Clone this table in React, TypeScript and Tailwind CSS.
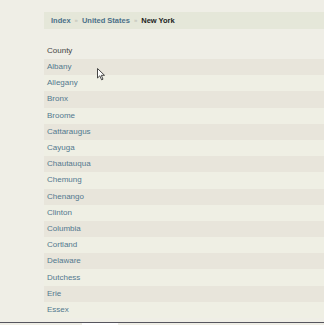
const counties = [
  "Albany",
  "Allegany",
  "Bronx",
  "Broome",
  "Cattaraugus",
  "Cayuga",
  "Chautauqua",
  "Chemung",
  "Chenango",
  "Clinton",
  "Columbia",
  "Cortland",
  "Delaware",
  "Dutchess",
  "Erie",
  "Essex",
];

export default function App() {
  return (
    <div
      className="relative w-full h-[325px] overflow-hidden bg-[#efeee6]"
      style={{ fontFamily: '"Liberation Sans", Arial, sans-serif' }}
    >
      {/* breadcrumb */}
      <div className="mt-[12px] ml-[44px] h-[17px] flex items-center gap-[4px] pl-[7px] bg-[#e5e7d9] text-[7.5px] font-bold">
        <span className="text-[#4b7088]">Index</span>
        <span className="text-[#c4c5bb] text-[6px]">»</span>
        <span className="text-[#4b7088]">United States</span>
        <span className="text-[#c4c5bb] text-[6px]">»</span>
        <span className="text-[#222]">New York</span>
      </div>

      <div className="mt-[14px] ml-[44px]">
        <div className="h-[16px] flex items-center pl-[3px] text-[8px] text-[#444]">
          County
        </div>
        {counties.map((c, i) => (
          <div
            key={c}
            className={
              "h-[16.2px] flex items-center pl-[3px] text-[8px] text-[#52788e] " +
              (i % 2 === 0 ? "bg-[#e8e5db]" : "bg-[#efefe4]")
            }
          >
            {c}
          </div>
        ))}
      </div>

      {/* bottom edge */}
      <div className="absolute left-0 right-0 top-[322px] h-[1px] bg-[#56555e]" />
      <div className="absolute left-[82px] w-[36px] top-[323px] h-[2px] bg-white" />

      {/* mouse pointer */}
      <svg
        className="absolute left-[97px] top-[68px]"
        width="9"
        height="13"
        viewBox="0 0 9 13"
      >
        <path
          d="M0.5 0.5 L0.5 10 L2.8 7.8 L4.6 11.8 L6 11.2 L4.3 7.3 L7.5 7.3 Z"
          fill="white"
          stroke="#333"
          strokeWidth="0.9"
          strokeLinejoin="round"
        />
      </svg>
    </div>
  );
}
